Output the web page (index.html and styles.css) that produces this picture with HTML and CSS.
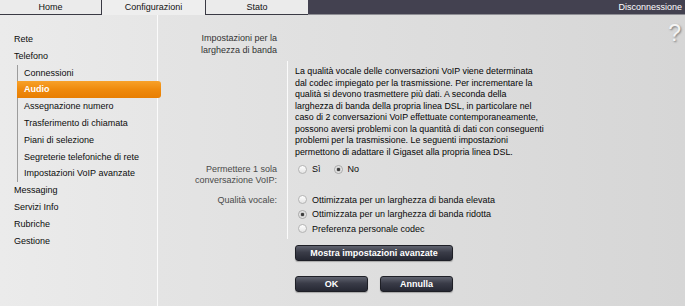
FILE: index.html
```html
<!DOCTYPE html>
<html lang="it">
<head>
<meta charset="utf-8">
<title>Configurazioni - Audio</title>
<link rel="stylesheet" href="styles.css">
</head>
<body>
<header class="top">
  <div class="tab tab-home">Home</div>
  <div class="tab tab-active">Configurazioni</div>
  <div class="tab tab-stato">Stato</div>
  <div class="bar"><span class="logout">Disconnessione</span></div>
</header>
<div class="main">
  <nav class="sidebar">
    <div class="item">Rete</div>
    <div class="item">Telefono</div>
    <div class="sub">
      <div class="item">Connessioni</div>
      <div class="item active">Audio</div>
      <div class="item">Assegnazione numero</div>
      <div class="item">Trasferimento di chiamata</div>
      <div class="item">Piani di selezione</div>
      <div class="item">Segreterie telefoniche di rete</div>
      <div class="item">Impostazioni VoIP avanzate</div>
    </div>
    <div class="item">Messaging</div>
    <div class="item">Servizi Info</div>
    <div class="item">Rubriche</div>
    <div class="item">Gestione</div>
  </nav>
  <section class="content">
    <div class="help">?</div>
    <div class="grid">
      <div class="heading">Impostazioni per la<br>larghezza di banda</div>
      <div class="blank"></div>
      <div class="lbl"></div>
      <div class="val desc">La qualità vocale delle conversazioni VoIP viene determinata<br>dal codec impiegato per la trasmissione. Per incrementare la<br>qualità si devono trasmettere più dati. A seconda della<br>larghezza di banda della propria linea DSL, in particolare nel<br>caso di 2 conversazioni VoIP effettuate contemporaneamente,<br>possono aversi problemi con la quantità di dati con conseguenti<br>problemi per la trasmissione. Le seguenti impostazioni<br>permettono di adattare il Gigaset alla propria linea DSL.</div>
      <div class="lbl lbl-two">Permettere 1 sola<br>conversazione VoIP:</div>
      <div class="val">
        <div class="yesno">
          <label class="opt"><input type="radio" name="one"><span>Sì</span></label>
          <label class="opt"><input type="radio" name="one" checked><span>No</span></label>
        </div>
      </div>
      <div class="lbl lbl-q">Qualità vocale:</div>
      <div class="val opts">
        <label class="opt"><input type="radio" name="q"><span>Ottimizzata per un larghezza di banda elevata</span></label>
        <label class="opt"><input type="radio" name="q" checked><span>Ottimizzata per un larghezza di banda ridotta</span></label>
        <label class="opt"><input type="radio" name="q"><span>Preferenza personale codec</span></label>
      </div>
    </div>
    <div class="actions">
      <button class="btn btn-wide">Mostra impostazioni avanzate</button>
      <div class="btn-row">
        <button class="btn btn-small">OK</button>
        <button class="btn btn-small">Annulla</button>
      </div>
    </div>
  </section>
</div>
</body>
</html>
```
FILE: styles.css
```css
html, body {
  margin: 0;
  padding: 0;
}
body {
  width: 685px;
  height: 306px;
  overflow: hidden;
  font-family: "Liberation Sans", Arial, sans-serif;
  font-size: 9px;
  color: #111;
  background: #e6e6e6;
}
.top {
  display: flex;
  height: 15px;
}
.tab {
  height: 14px;
  line-height: 14px;
  text-align: center;
  background: #ebebeb;
  color: #111;
}
.tab-home {
  width: 101px;
  border-right: 1px solid #3a3a44;
  border-bottom: 1px solid #3a3a44;
}
.tab-active {
  width: 103px;
  height: 15px;
  background: #eeeeee;
}
.tab-stato {
  width: 102px;
  border-left: 1px solid #3a3a44;
  border-bottom: 1px solid #3a3a44;
}
.bar {
  flex: 1;
  height: 14px;
  line-height: 14px;
  background: #434150;
  border-bottom: 1px solid #8e8e94;
  display: flex;
  justify-content: flex-end;
  padding-right: 3px;
}
.logout {
  color: #fff;
}
.main {
  display: flex;
  height: 291px;
}
.sidebar {
  width: 157px;
  flex: none;
  border-right: 1px solid #fbfbfb;
  background: linear-gradient(to right, #ebebeb, #e6e6e6);
  padding-top: 16px;
}
.item {
  line-height: 16.8px;
  padding-left: 14px;
  white-space: nowrap;
  color: #0c0c0c;
}
.sub {
  margin-left: 17px;
  border-left: 1px solid #9c9c9c;
}
.sub .item {
  padding-left: 6px;
}
.sub .item.active {
  position: relative;
  z-index: 1;
  margin-left: -1px;
  margin-right: -4px;
  padding-left: 7px;
  background: linear-gradient(#f7a12a, #ef8a0c 50%, #e87e02);
  color: #fff;
  font-weight: bold;
  border-radius: 0 3px 3px 0;
}
.content {
  flex: 1;
  position: relative;
  padding-top: 18px;
  background: linear-gradient(to right, #e4e4e4, #d6d6d6);
}
.help {
  position: absolute;
  top: 7px;
  right: 4px;
  font-size: 23px;
  line-height: 23px;
  color: #f4f4f4;
  text-shadow: 1px 1px 2px #7a7a7a;
}
.grid {
  display: grid;
  grid-template-columns: 129px 1fr;
}
.heading {
  text-align: right;
  padding-right: 10px;
  line-height: 11.5px;
  color: #333;
  margin-bottom: 5px;
}
.lbl {
  text-align: right;
  padding-right: 10px;
  color: #4a4a4a;
  line-height: 11px;
}
.lbl-two {
  padding-top: 0.5px;
  padding-bottom: 7px;
}
.lbl-q {
  line-height: 14.5px;
}
.val {
  border-left: 1px solid #fbfbfb;
  padding-left: 7px;
}
.desc {
  padding-top: 5px;
  padding-bottom: 5px;
  line-height: 11.5px;
  color: #050505;
  white-space: nowrap;
  font-size: 8.85px;
}
.yesno {
  display: flex;
  height: 12px;
  align-items: center;
}
.yesno .opt {
  height: 12px;
  margin-right: 10px;
}
.opts {
  padding-bottom: 3px;
}
.opt {
  display: flex;
  align-items: center;
  height: 14.5px;
  color: #0a0a0a;
  white-space: nowrap;
}
.opt input {
  appearance: none;
  -webkit-appearance: none;
  width: 9px;
  height: 9px;
  margin: 0 5px 0 3px;
  border: 1px solid #b4b4b4;
  border-radius: 50%;
  box-sizing: border-box;
  background: linear-gradient(#ffffff, #e4e4e4);
  flex: none;
}
.opt input:checked {
  background: radial-gradient(circle, #3c3c3c 0, #3c3c3c 1.3px, #c8c8c8 2px, #f4f4f4 3.5px);
  border-color: #a6a6a6;
}
.actions {
  margin-left: 137px;
  margin-top: 6px;
}
.btn {
  display: block;
  height: 16px;
  padding: 0;
  border: 1px solid #1e1f26;
  border-radius: 3px;
  background: linear-gradient(#60636f, #3a3c48 45%, #262833);
  color: #fff;
  font-family: "Liberation Sans", Arial, sans-serif;
  font-size: 9px;
  font-weight: bold;
  box-shadow: 0 1px 1px rgba(0, 0, 0, 0.25);
}
.btn-wide {
  width: 158px;
}
.btn-row {
  display: flex;
  gap: 12px;
  margin-top: 15px;
}
.btn-small {
  width: 73px;
}
```
